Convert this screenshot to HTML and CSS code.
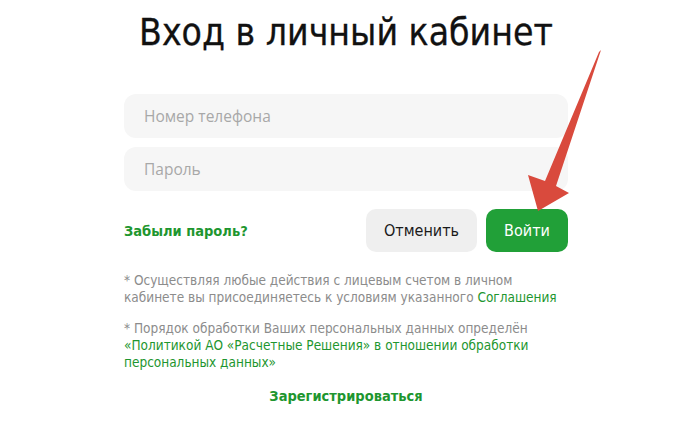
FILE: index.html
```html
<!DOCTYPE html>
<html lang="ru">
<head>
<meta charset="utf-8">
<link rel="stylesheet" href="styles.css">
</head>
<body>
<div class="page">
  <h1 class="title">Вход в личный кабинет</h1>
  <div class="fields">
    <div class="field">Номер телефона</div>
    <div class="field">Пароль</div>
  </div>
  <div class="actions">
    <a class="forgot">Забыли пароль?</a>
    <div class="buttons">
      <button class="btn btn-cancel">Отменить</button>
      <button class="btn btn-login">Войти</button>
    </div>
  </div>
  <p class="note">* Осуществляя любые действия с лицевым счетом в личном кабинете вы присоединяетесь к условиям указанного <a class="link">Соглашения</a></p>
  <p class="note">* Порядок обработки Ваших персональных данных определён <a class="link">«Политикой АО «Расчетные Решения» в отношении обработки персональных данных»</a></p>
  <div class="register"><a class="reg-link">Зарегистрироваться</a></div>
</div>
<svg class="arrow" width="700" height="422" viewBox="0 0 700 422">
  <polygon points="601,50 556,186 569,193 538,211 528,175 545,181 599,52" fill="#d94a3d"/>
</svg>
</body>
</html>
```
FILE: styles.css
```css
html, body {
  margin: 0;
  padding: 0;
  background: #ffffff;
}
body {
  font-family: "DejaVu Sans Condensed", "DejaVu Sans", Verdana, sans-serif;
  width: 700px;
  height: 422px;
  overflow: hidden;
  position: relative;
}
.page {
  width: 444px;
  margin-left: 124px;
  padding-top: 8px;
}
.title {
  margin: 0 -40px;
  white-space: nowrap;
  text-align: center;
  font-weight: normal;
  font-size: 37px;
  line-height: 50px;
  color: #111111;
  -webkit-text-stroke: 0.3px #111111;
}
.fields {
  margin-top: 36px;
  display: flex;
  flex-direction: column;
  gap: 9px;
}
.field {
  height: 44px;
  border-radius: 12px;
  background: #f6f6f6;
  display: flex;
  align-items: center;
  padding-left: 20px;
  font-family: "Open Sans", sans-serif;
  font-size: 15.5px;
  color: #a8a8a8;
}
.actions {
  margin-top: 18px;
  display: flex;
  align-items: center;
  justify-content: space-between;
}
.forgot {
  font-weight: bold;
  font-size: 14.5px;
  color: #1e962f;
}
.buttons {
  display: flex;
  gap: 9px;
}
.btn {
  height: 43px;
  border: none;
  border-radius: 10px;
  font-family: "DejaVu Sans Condensed", "DejaVu Sans", Verdana, sans-serif;
  font-size: 16px;
  padding: 0;
}
.btn-cancel {
  width: 111px;
  background: #efefef;
  color: #1a1a1a;
}
.btn-login {
  width: 82px;
  background: #21a038;
  color: #ffffff;
}
.note {
  margin: 20px 0 0 0;
  font-size: 13.5px;
  line-height: 17px;
  color: #8c8c8c;
}
.note + .note {
  margin-top: 14px;
}
.link {
  color: #1e962f;
}
.register {
  margin-top: 15px;
  text-align: center;
}
.reg-link {
  font-size: 14.5px;
  font-weight: bold;
  color: #1e962f;
}
.arrow {
  position: absolute;
  left: 0;
  top: 0;
  pointer-events: none;
}
```
